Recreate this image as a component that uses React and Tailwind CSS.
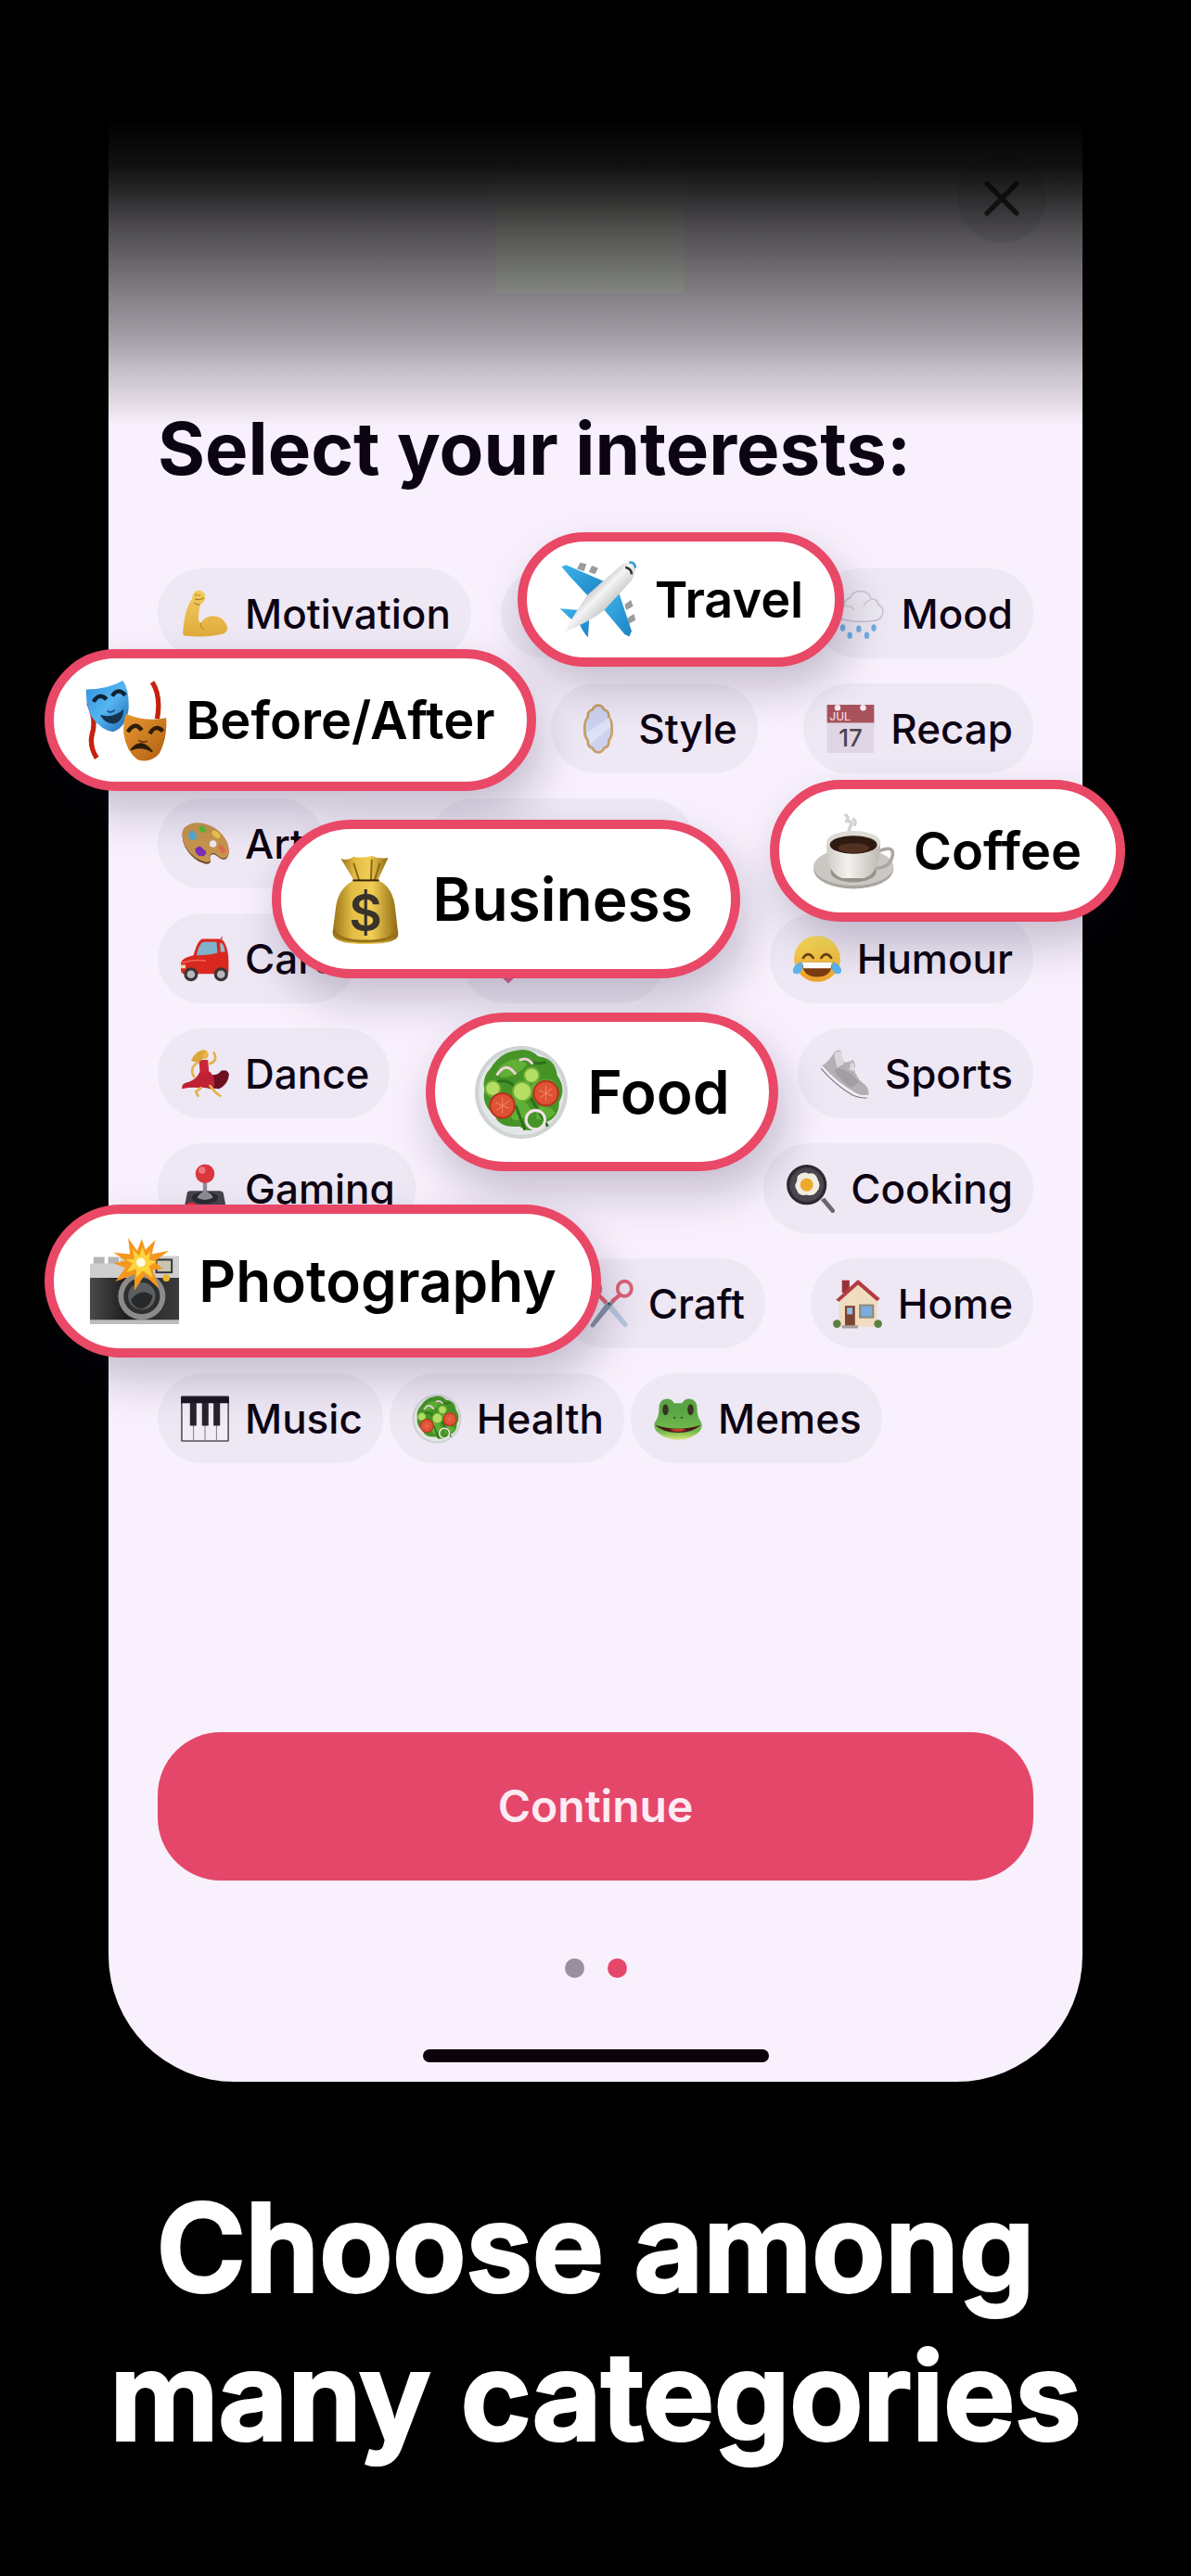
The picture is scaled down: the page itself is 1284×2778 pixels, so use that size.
import { useState } from "react";
import { X } from "lucide-react";

// Emoji style drawings, all on a 100 x 100 box
const icons = {
  arm: (
    <>
      <defs>
        <linearGradient id="arm" x1="0" y1="0" x2="0" y2="1">
          <stop offset="0" stopColor="#f3cd5e" />
          <stop offset="1" stopColor="#e0ab3c" />
        </linearGradient>
      </defs>
      <path d="M24 20 Q26 4 36 3 Q49 4 50 14 Q51 26 40 32 Q37 46 37 60 Q38 67 42 68 Q50 54 66 54 Q86 54 94 74 Q97 86 86 90 Q56 98 12 94 Q5 94 6 86 Q8 50 20 26 Z" fill="url(#arm)" />
      <path d="M30 14 l5 -4 M37 14 l4 -2 M30 20 Q38 24 48 18 M28 28 Q34 32 40 32" stroke="#a87820" strokeWidth="2" fill="none" />
      <path d="M42 68 Q40 77 48 82" stroke="#bd8a2b" strokeWidth="2" fill="none" />
    </>
  ),
  plane: (
    <>
      <defs>
        <linearGradient id="body" x1="0" y1="0" x2="1" y2="1">
          <stop offset="0.25" stopColor="#8d8d8d" />
          <stop offset="0.48" stopColor="#f5f5f5" />
          <stop offset="0.8" stopColor="#9a9a9a" />
        </linearGradient>
        <linearGradient id="wing" x1="0" y1="0" x2="1" y2="1">
          <stop offset="0" stopColor="#3cb4ea" />
          <stop offset="1" stopColor="#1d83c4" />
        </linearGradient>
      </defs>
      <g fill="#9b9b9b">
        <path d="M24 10 l4 -8 l8 2 l-3 9 z M39 14 l4 -8 l8 3 l-4 8 z M85 56 l8 -6 l3 8 l-9 5 z M89 73 l8 -5 l2 8 l-9 5 z" />
      </g>
      <path d="M4 7 L10 5 L58 26 L38 45 L14 19 Z" fill="url(#wing)" />
      <path d="M58 62 L78 42 L94 90 L91 97 L85 94 Z" fill="url(#wing)" />
      <path d="M2 61 L26 63 L34 68 L24 80 Q12 72 2 61 Z M25 76 L40 68 L38 98 Q30 90 25 76 Z" fill="url(#wing)" />
      <path d="M80 6 Q91 -1 98 3 Q101 10 94 25 L58 64 Q40 78 8 91 Q20 68 38 43 Z" fill="url(#body)" />
      <path d="M86 8 Q94 10 94 17" stroke="#333" strokeWidth="3" fill="none" />
      <path d="M91 2 Q98 1 99 9" stroke="#2f97d8" strokeWidth="3" fill="none" />
    </>
  ),
  masks: (
    <>
      <defs>
        <linearGradient id="blueMask" x1="0" y1="0" x2="1" y2="1">
          <stop offset="0" stopColor="#2d8fdb" />
          <stop offset="0.5" stopColor="#55b5f2" />
          <stop offset="1" stopColor="#1b66ae" />
        </linearGradient>
        <linearGradient id="goldMask" x1="0" y1="0" x2="1" y2="1">
          <stop offset="0" stopColor="#e99a32" />
          <stop offset="1" stopColor="#b05e12" />
        </linearGradient>
      </defs>
      <path d="M4 28 Q14 50 8 68 Q5 82 14 96" stroke="#c5220f" strokeWidth="6" fill="none" />
      <path d="M82 3 Q93 20 88 48" stroke="#c5220f" strokeWidth="6" fill="none" />
      <path d="M1 12 Q26 12 46 1 Q54 12 53 36 Q50 58 34 64 Q20 62 8 46 Q0 30 1 12 Z" fill="url(#blueMask)" />
      <path d="M10 27 Q17 15 26 24 M33 20 Q40 9 49 19" stroke="#123" strokeWidth="5" fill="none" />
      <path d="M18 43 Q34 48 47 36 Q46 52 34 54 Q24 54 18 43 Z" fill="#14334f" />
      <path d="M27 38 q4 4 9 -1" stroke="#195486" strokeWidth="2" fill="none" />
      <path d="M50 42 Q75 52 99 47 Q101 70 91 90 Q80 103 64 98 Q50 88 47 66 Q46 52 50 42 Z" fill="url(#goldMask)" />
      <path d="M52 64 Q61 50 69 62 M79 66 Q86 54 95 63" stroke="#2d1c08" strokeWidth="5" fill="none" />
      <path d="M56 86 Q68 70 82 88 Q68 80 56 86 Z" fill="#2d1c08" stroke="#2d1c08" strokeWidth="2" />
      <path d="M65 74 q5 4 11 1" stroke="#6d3c0b" strokeWidth="2" fill="none" />
    </>
  ),
  rain: (
    <>
      <path d="M18 62 Q2 58 5 44 Q8 34 18 34 Q16 22 28 18 Q36 2 54 5 Q68 8 70 20 Q84 20 85 32 Q98 38 93 52 Q88 64 74 64 Q46 68 18 62 Z" fill="#eeeaf3" stroke="#c7c3d2" strokeWidth="3" />
      <path d="M20 36 Q32 32 36 42 M70 22 Q58 24 56 36" stroke="#d6d1df" strokeWidth="3" fill="none" />
      <g fill="#6fb0e2">
        <ellipse cx="14" cy="78" rx="5" ry="7" />
        <ellipse cx="46" cy="80" rx="5" ry="7" />
        <ellipse cx="76" cy="78" rx="5" ry="7" />
        <ellipse cx="28" cy="93" rx="5" ry="7" />
        <ellipse cx="62" cy="93" rx="5" ry="7" />
      </g>
    </>
  ),
  mirror: (
    <>
      <path d="M50 3 Q58 3 62 12 Q72 14 71 27 Q78 34 77 50 Q78 66 71 73 Q72 86 62 88 Q58 97 50 97 Q42 97 38 88 Q28 86 29 73 Q22 66 23 50 Q22 34 29 27 Q28 14 38 12 Q42 3 50 3 Z" fill="#cdd2f0" stroke="#c5a066" strokeWidth="5" />
      <path d="M27 58 L72 28 L75 46 L34 80 Z" fill="#dfe2f6" />
    </>
  ),
  calendar: (
    <>
      <path d="M3 38 H97 V98 H3 Z" fill="#dfd5e4" />
      <path d="M3 2 H97 V38 H3 Z" fill="#a7525d" />
      <circle cx="24" cy="8" r="6" fill="#f8eaf3" />
      <circle cx="75" cy="8" r="6" fill="#f8eaf3" />
      <text x="8" y="33" fontSize="22" fill="#f1dbe4">JUL</text>
      <text x="50" y="85" fontSize="48" textAnchor="middle" fill="#4a4450">17</text>
    </>
  ),
  palette: (
    <>
      <path d="M6 24 Q18 6 46 11 Q78 18 94 48 Q102 70 92 80 Q84 84 76 76 Q68 68 62 72 Q58 76 61 82 Q62 92 50 90 Q26 84 10 56 Q2 38 6 24 Z" fill="#6b431f" />
      <path d="M6 22 Q18 4 46 9 Q78 16 94 46 Q102 68 92 78 Q84 82 76 74 Q68 66 62 70 Q58 74 61 80 Q62 88 50 86 Q26 80 10 54 Q2 36 6 22 Z" fill="#c7944f" />
      <path d="M17 32 q6 -14 13 -4 q8 8 0 14 q-12 4 -13 -10 z" fill="#54a9cf" />
      <path d="M38 18 q8 -10 12 0 q7 8 -2 10 q-10 0 -10 -10 z" fill="#5cb83a" />
      <path d="M65 24 q10 -2 16 10 q-2 9 -12 2 q-8 -6 -4 -12 z" fill="#edc74c" />
      <path d="M78 52 q10 2 14 13 q-4 8 -10 0 q-8 -8 -4 -13 z" fill="#e06a4c" />
      <path d="M30 60 q10 -10 16 0 q12 6 2 14 q-16 4 -18 -14 z" fill="#7a2fb4" />
      <circle cx="66" cy="50" r="7" fill="#f0e8f4" />
    </>
  ),
  bag: (
    <>
      <defs>
        <linearGradient id="bag" x1="0" y1="0" x2="1" y2="0">
          <stop offset="0" stopColor="#9a7315" />
          <stop offset="0.3" stopColor="#e3bd45" />
          <stop offset="0.6" stopColor="#f0cd55" />
          <stop offset="1" stopColor="#8f6810" />
        </linearGradient>
      </defs>
      <path d="M24 5 Q31 8 38 3 Q49 5 58 2 Q67 6 76 4 L64 30 L39 30 Z" fill="url(#bag)" />
      <path d="M38 10 L44 29 M58 6 L57 29 M67 10 L61 29" stroke="#8c6816" strokeWidth="2" />
      <path d="M38 29 H65 Q82 36 84 62 L87 88 Q88 99 51 99 Q14 99 15 86 L18 62 Q20 38 38 29 Z" fill="url(#bag)" />
      <path d="M37 29 H66" stroke="#33240b" strokeWidth="2" />
      <path d="M16 84 Q21 96 51 96 Q81 96 86 84" stroke="#96701a" strokeWidth="3" fill="none" />
      <text x="51" y="85" fontSize="56" textAnchor="middle" fill="#39332c">$</text>
    </>
  ),
  coffee: (
    <>
      <defs>
        <linearGradient id="cup" x1="0" y1="0" x2="1" y2="0">
          <stop offset="0" stopColor="#cfccc6" />
          <stop offset="0.4" stopColor="#f4f2ee" />
          <stop offset="1" stopColor="#bdb9b2" />
        </linearGradient>
      </defs>
      <path d="M38 5 q6 2 3 8 q8 0 4 7 q-4 6 3 10 M48 10 q5 3 2 9" stroke="#d2d2d2" strokeWidth="4" fill="none" />
      <ellipse cx="49" cy="72" rx="49" ry="24" fill="#a9a6a0" />
      <ellipse cx="49" cy="69" rx="49" ry="23" fill="#cbc8c3" />
      <ellipse cx="49" cy="75" rx="28" ry="13" fill="#96928b" />
      <path d="M80 50 Q98 42 97 54 Q95 70 76 71" stroke="#aaa7a2" strokeWidth="4" fill="none" />
      <path d="M16 39 Q16 79 36 83 H62 Q82 77 82 39 Z" fill="url(#cup)" />
      <ellipse cx="49" cy="39" rx="33" ry="14" fill="#dedbd5" />
      <ellipse cx="49" cy="42" rx="29" ry="11" fill="#2f1a12" />
      <ellipse cx="49" cy="46" rx="19" ry="6" fill="#523022" />
    </>
  ),
  car: (
    <>
      <path d="M81 17 L84 6" stroke="#9a3030" strokeWidth="2" />
      <path d="M27 43 Q36 10 46 10 H76 Q87 10 90 20 Q97 34 97 56 V74 Q97 80 90 80 H8 Q1 80 2 70 V58 Q4 48 27 43 Z" fill="#d9281f" />
      <path d="M33 43 Q39 17 48 16 H73 L75 38 Q60 43 33 43 Z" fill="#7fb2cb" />
      <path d="M80 18 Q88 18 90 36 H81 Z" fill="#94bccd" />
      <path d="M4 58 Q30 50 52 54" stroke="#f26359" strokeWidth="3" fill="none" />
      <circle cx="22" cy="81" r="14" fill="#3a3537" />
      <circle cx="22" cy="81" r="8" fill="#b9b7ba" />
      <circle cx="82" cy="81" r="14" fill="#3a3537" />
      <circle cx="82" cy="81" r="8" fill="#b9b7ba" />
      <rect x="2" y="62" width="9" height="7" fill="#f3d6a5" />
    </>
  ),
  heart: <path d="M50 99 Q4 58 6 32 Q10 6 32 8 Q46 10 50 24 Q54 10 68 8 Q90 6 94 32 Q96 58 50 99 Z" fill="#d8608f" />,
  laugh: (
    <>
      <defs>
        <linearGradient id="face" x1="0" y1="0" x2="0" y2="1">
          <stop offset="0" stopColor="#fbe25a" />
          <stop offset="1" stopColor="#eda02b" />
        </linearGradient>
      </defs>
      <circle cx="50" cy="50" r="46" fill="url(#face)" />
      <path d="M22 48 Q32 34 42 48 M58 48 Q68 34 78 48" stroke="#6d4312" strokeWidth="5" fill="none" strokeLinecap="round" />
      <path d="M20 57 H80 Q80 86 50 86 Q20 86 20 57 Z" fill="#7c3c12" />
      <path d="M20 57 H80 L77 69 H23 Z" fill="#fff" />
      <path d="M18 56 Q26 74 12 80 Q0 82 2 70 Q6 60 18 56 Z M82 56 Q74 74 88 80 Q100 82 98 70 Q94 60 82 56 Z" fill="#5db4ee" />
    </>
  ),
  dancer: (
    <>
      <path d="M60 52 Q76 54 82 44 Q96 40 98 52 Q96 72 78 80 L50 78 Z" fill="#6d1020" />
      <path d="M40 46 L60 46 Q74 60 66 82 Q50 76 36 78 Q22 76 4 80 Q2 68 18 66 Q32 62 40 46 Z" fill="#bf2135" />
      <path d="M38 22 H56 L58 48 H40 Z" fill="#c9263a" />
      <path d="M36 28 Q18 36 28 56 M58 30 Q76 26 68 8 M42 78 L32 86 L36 94 M60 74 L72 88 L80 94" stroke="#e5b148" strokeWidth="5" fill="none" strokeLinecap="round" />
      <circle cx="48" cy="12" r="9" fill="#e9b64d" />
      <path d="M22 24 Q34 -2 54 4 Q44 10 44 22 Q36 30 22 24 Z" fill="#dba63a" />
    </>
  ),
  salad: (
    <>
      <circle cx="50" cy="50" r="49" fill="#cfd3d4" />
      <circle cx="50" cy="50" r="45" fill="#e2e6e6" />
      <path d="M18 24 Q28 8 44 6 Q58 2 68 12 Q86 14 88 32 Q98 46 90 60 Q90 78 74 82 Q62 96 48 86 Q26 88 22 74 Q8 64 11 48 Q8 34 18 24 Z" fill="#469427" />
      <path d="M26 24 Q44 8 56 20 Q46 34 28 34 Z M58 44 Q80 28 88 44 Q84 54 66 54 Z M36 60 Q50 50 60 68 Q50 84 40 78 Z M66 66 Q80 62 86 72 Q76 82 66 78 Z" fill="#5fb035" />
      <path d="M16 44 Q34 30 46 48 M52 14 Q66 22 76 18 M44 64 L54 90 M60 56 L78 86" stroke="#2d701b" strokeWidth="3" fill="none" />
      <g fill="#b4df62" stroke="#6eae38" strokeWidth="2">
        <circle cx="20" cy="46" r="8" />
        <circle cx="61" cy="32" r="8" />
        <circle cx="51" cy="49" r="10" />
      </g>
      <g fill="#df5233" stroke="#b4351f" strokeWidth="2">
        <circle cx="30" cy="64" r="13" />
        <circle cx="76" cy="51" r="13" />
      </g>
      <path d="M30 56 V72 M23 61 L37 67 M37 59 L24 69 M76 43 V59 M69 48 L83 54 M82 46 L70 56" stroke="#ee8467" strokeWidth="1" />
      <circle cx="65" cy="79" r="10" fill="none" stroke="#f0e3e6" strokeWidth="3" />
      <path d="M24 32 Q34 16 44 31 M48 16 Q56 12 62 20" stroke="#eed3da" strokeWidth="3" fill="none" />
    </>
  ),
  shoe: (
    <>
      <path d="M4 34 Q16 28 28 8 Q34 0 42 4 Q42 20 50 28 Q58 26 66 22 Q72 32 70 46 Q76 62 92 74 Q100 86 96 94 Q82 98 60 84 Q26 62 4 40 Z" fill="#b3afb4" />
      <path d="M28 10 Q36 2 42 6 L48 30 L34 38 Z M62 26 L68 30 L70 46 L58 42 Z" fill="#dad7db" />
      <path d="M34 38 Q60 44 78 66 L62 78 Q44 66 30 46 Z" fill="#a19da2" />
      <path d="M3 36 Q34 70 66 88 Q82 98 96 94" stroke="#f1eff3" strokeWidth="5" fill="none" />
      <path d="M2 39 Q32 74 66 93 Q80 99 94 98" stroke="#79757c" strokeWidth="2" fill="none" />
      <path d="M68 40 l8 -2 M70 48 l8 -2 M74 56 l8 -2 M78 62 l8 -1" stroke="#eee" strokeWidth="3" />
    </>
  ),
  joystick: (
    <>
      <path d="M14 60 Q14 54 22 54 H78 Q86 54 87 60 L93 92 Q93 98 86 98 H14 Q7 98 8 92 Z" fill="#46434c" />
      <ellipse cx="50" cy="68" rx="26" ry="12" fill="#2a2830" />
      <path d="M46 28 H54 V56 Q64 60 66 68 Q50 76 34 68 Q38 60 46 56 Z" fill="#8d8a95" />
      <circle cx="50" cy="20" r="19" fill="#d93640" />
      <circle cx="44" cy="13" r="7" fill="#f0767b" />
      <ellipse cx="23" cy="82" rx="9" ry="5" fill="#d92d38" />
    </>
  ),
  pan: (
    <>
      <path d="M70 72 L78 68 L98 92 Q99 99 92 98 Z" fill="#6a6670" />
      <circle cx="42" cy="42" r="40" fill="#2c2930" />
      <circle cx="42" cy="42" r="34" fill="#4b4750" />
      <path d="M24 24 Q36 14 46 20 Q60 16 64 32 Q72 44 62 56 Q54 66 42 62 Q26 66 22 52 Q16 44 22 36 Z" fill="#f3eee4" />
      <circle cx="42" cy="42" r="13" fill="#edaa2c" />
    </>
  ),
  camera: (
    <>
      <defs>
        <linearGradient id="leather" x1="0" y1="0" x2="1" y2="0">
          <stop offset="0" stopColor="#4a4a4a" />
          <stop offset="0.4" stopColor="#1f1f1f" />
          <stop offset="1" stopColor="#3b3b3b" />
        </linearGradient>
      </defs>
      <path d="M5 23 H17 V32 H5 Z M21 23 H33 V32 H21 Z" fill="#b5b5b5" />
      <path d="M1 32 Q1 30 4 30 H34 V22 H99 V46 H1 Z" fill="#cfcfcf" />
      <path d="M1 46 H99 V94 H1 Z" fill="url(#leather)" />
      <path d="M1 92 H99 V97 H1 Z" fill="#bdbdbd" />
      <rect x="74" y="26" width="17" height="14" fill="#c9c3b2" stroke="#333" strokeWidth="2" />
      <circle cx="85" cy="46" r="4" fill="#e9b52c" />
      <circle cx="58" cy="66" r="26" fill="#8b8b8b" />
      <circle cx="58" cy="66" r="20" fill="#2e2e2e" />
      <circle cx="58" cy="66" r="15" fill="#5b5e60" />
      <path d="M46 70 Q58 56 70 66 Q66 80 56 80 Q48 78 46 70 Z" fill="#26282a" />
      <path d="M43 2 L53 16 L58 3 L62 15 L73 4 L69 20 L88 16 L72 28 L81 36 L70 37 L77 58 L61 43 L50 60 L50 42 L29 50 L40 35 L27 30 L40 27 L27 18 L45 20 Z" fill="#f5961d" />
      <path d="M48 14 L55 22 L59 12 L62 22 L68 17 L66 26 L75 28 L66 33 L70 46 L59 38 L52 46 L52 36 L41 40 L48 30 L40 26 L50 25 Z" fill="#fcd53c" />
      <circle cx="57" cy="29" r="5" fill="#fffbe0" />
    </>
  ),
  scissors: (
    <>
      <path d="M30 38 L56 50 L88 90 Q88 98 82 97 L44 54 Z" fill="#bcc8de" />
      <path d="M70 38 L44 50 L14 92 Q14 98 20 97 L56 54 Z" fill="#8791a5" />
      <ellipse cx="82" cy="20" rx="14" ry="15" fill="none" stroke="#dd6176" strokeWidth="7" />
      <ellipse cx="20" cy="20" rx="14" ry="15" fill="none" stroke="#dd6176" strokeWidth="7" />
      <path d="M30 32 L46 48 M72 33 L56 46" stroke="#dd6176" strokeWidth="8" />
      <circle cx="51" cy="50" r="3" fill="#4b5362" />
    </>
  ),
  house: (
    <>
      <path d="M18 3 H33 V28 H18 Z" fill="#9c3038" />
      <path d="M12 42 L50 8 L88 42 V96 H12 Z" fill="#f0dcc0" />
      <path d="M6 42 L50 2 L94 40 L88 45 L50 12 L12 46 Z" fill="#b43c42" />
      <rect x="24" y="54" width="20" height="40" fill="#7c4330" />
      <rect x="28" y="58" width="11" height="13" fill="#8ebce6" />
      <rect x="54" y="53" width="26" height="24" fill="#7aade0" stroke="#8f8a80" strokeWidth="4" />
      <path d="M18 93 H50 V99 H18 Z" fill="#a59c9b" />
      <circle cx="8" cy="90" r="8" fill="#5c8042" />
      <circle cx="90" cy="90" r="8" fill="#5c8042" />
    </>
  ),
  piano: (
    <>
      <rect x="2" y="4" width="96" height="92" rx="3" fill="#575059" />
      <rect x="5" y="18" width="90" height="75" fill="#f2ecf5" />
      <path d="M2 6 H98 V19 H2 Z" fill="#1d1422" />
      <path d="M27 60 V94 M50 60 V94 M73 60 V94" stroke="#8b828e" strokeWidth="2" />
      <path d="M20 18 H33 V64 H20 Z M44 18 H57 V64 H44 Z M67 18 H80 V64 H67 Z" fill="#2a212f" />
    </>
  ),
  frog: (
    <>
      <defs>
        <linearGradient id="frog" x1="0" y1="0" x2="0" y2="1">
          <stop offset="0.3" stopColor="#59a444" />
          <stop offset="0.8" stopColor="#74bb4e" />
          <stop offset="1" stopColor="#dbe57a" />
        </linearGradient>
      </defs>
      <path d="M12 30 Q12 10 28 10 Q38 10 42 19 H58 Q62 10 72 10 Q88 10 88 30 Q88 42 92 50 Q102 62 94 74 Q78 92 50 92 Q22 92 6 74 Q-2 62 8 50 Q12 42 12 30 Z" fill="url(#frog)" />
      <ellipse cx="25" cy="32" rx="6" ry="11" fill="#3a3320" />
      <ellipse cx="75" cy="32" rx="6" ry="11" fill="#3a3320" />
      <path d="M4 62 Q28 70 50 70 Q72 70 96 62 Q80 78 50 78 Q20 78 4 62 Z" fill="#4c1a16" />
      <path d="M34 72 Q50 68 66 72 Q50 80 34 72 Z" fill="#c23a2e" />
      <circle cx="43" cy="48" r="2" fill="#2a5522" />
      <circle cx="57" cy="48" r="2" fill="#2a5522" />
    </>
  ),
};

function Icon({ name, className }) {
  return (
    <svg viewBox="0 0 100 100" className={`shrink-0 ${className}`} aria-hidden="true">
      {icons[name]}
    </svg>
  );
}

// Entries without a label are the ones lying under a highlighted category
const rows = [
  [
    { label: "Motivation", icon: "arm" },
    { width: "w-[306px]" },
    { label: "Mood", icon: "rain" },
  ],
  [
    { width: "w-[375px]" },
    { label: "Style", icon: "mirror" },
    { label: "Recap", icon: "calendar" },
  ],
  [
    { label: "Art", icon: "palette" },
    { width: "w-[286px]" },
    { width: "w-[254px]" },
  ],
  [
    { label: "Cars", icon: "car" },
    { icon: "heart", width: "w-[220px]" },
    { label: "Humour", icon: "laugh" },
  ],
  [
    { label: "Dance", icon: "dancer" },
    { label: "Sports", icon: "shoe" },
  ],
  [
    { label: "Gaming", icon: "joystick" },
    { label: "Cooking", icon: "pan" },
  ],
  [
    { width: "w-[386px]" },
    { label: "Craft", icon: "scissors" },
    { label: "Home", icon: "house" },
  ],
];

const lastRow = [
  { label: "Music", icon: "piano" },
  { label: "Health", icon: "salad" },
  { label: "Memes", icon: "frog" },
];

const highlights = [
  {
    label: "Travel",
    icon: "plane",
    box: "left-[441px] top-[444px] h-[145px] w-[352px] text-[54px] gap-5",
    size: "size-[84px]",
  },
  {
    label: "Before/After",
    icon: "masks",
    box: "left-[-69px] top-[570px] h-[153px] w-[530px] text-[56px] gap-5",
    size: "size-[88px]",
  },
  {
    label: "Business",
    icon: "bag",
    box: "left-[176px] top-[754px] h-[171px] w-[505px] text-[64px] gap-6",
    size: "size-[98px]",
  },
  {
    label: "Coffee",
    icon: "coffee",
    box: "right-[-46px] top-[711px] h-[153px] w-[383px] text-[56px] gap-5",
    size: "size-[88px]",
  },
  {
    label: "Food",
    icon: "salad",
    box: "left-[342px] top-[962px] h-[171px] w-[380px] text-[64px] gap-5",
    size: "size-[102px]",
  },
  {
    label: "Photography",
    icon: "camera",
    box: "left-[-69px] top-[1169px] h-[165px] w-[600px] text-[62px] gap-5",
    size: "size-[98px]",
  },
];

function Chip({ item, selected, onClick }) {
  if (!item.label) {
    return (
      <div className={`flex h-[97px] items-center rounded-full bg-[#eee7f4] pl-6 ${item.width}`}>
        {item.icon && <Icon name={item.icon} className="size-[54px]" />}
      </div>
    );
  }

  return (
    <button
      type="button"
      aria-pressed={selected}
      onClick={onClick}
      className="flex h-[97px] items-center gap-4 rounded-full bg-[#eee7f4] pl-6 pr-[22px] text-[44px] font-medium text-[#0d0413]"
    >
      <Icon name={item.icon} className="size-[54px]" />
      {item.label}
    </button>
  );
}

export default function App() {
  const [selected, setSelected] = useState(highlights.map((h) => h.label));

  const toggle = (label) => {
    setSelected((prev) =>
      prev.includes(label) ? prev.filter((l) => l !== label) : [...prev, label]
    );
  };

  return (
    <div className="min-h-screen overflow-hidden bg-black font-['Inter',sans-serif]">
      {/* Phone screen */}
      <main className="relative mx-[117px] mt-[130px] rounded-b-[136px] bg-[#f8f0fc] px-[53px] pb-[21px]">
        <div className="flex h-[306px] items-start justify-end pt-[36px]">
          <div className="mr-[294px] mt-[14px] h-[137px] w-[204px] bg-[#fafff6]" />
          <button
            type="button"
            aria-label="Close"
            className="-mr-[14px] flex size-[96px] items-center justify-center rounded-full bg-[#e6dfea] text-[#4b464e]"
          >
            <X size={64} strokeWidth={2} />
          </button>
        </div>

        <h1 className="text-[78px] font-bold leading-[96px] text-[#0d0413]">
          Select your interests:
        </h1>

        {/* Interests */}
        <div className="mt-[81px] flex flex-col gap-[27px]">
          {rows.map((row, i) => (
            <div key={i} className="flex justify-between">
              {row.map((item, j) => (
                <Chip
                  key={j}
                  item={item}
                  selected={selected.includes(item.label)}
                  onClick={() => toggle(item.label)}
                />
              ))}
            </div>
          ))}
          <div className="flex gap-[7px]">
            {lastRow.map((item) => (
              <Chip
                key={item.label}
                item={item}
                selected={selected.includes(item.label)}
                onClick={() => toggle(item.label)}
              />
            ))}
          </div>
        </div>

        <button
          type="button"
          className="mt-[290px] h-[160px] w-full rounded-[68px] bg-[#e5476a] text-[48px] font-semibold text-[#fdebf4]"
        >
          Continue
        </button>

        <div className="mt-[84px] flex justify-center gap-[25px]">
          <span className="size-[21px] rounded-full bg-[#998f9e]" />
          <span className="size-[21px] rounded-full bg-[#e5476a]" />
        </div>
        <div className="mx-auto mt-[77px] h-[14px] w-[373px] rounded-full bg-[#0c020c]" />

        {/* Fade over the status bar */}
        <div className="pointer-events-none absolute inset-x-0 top-0 h-[330px] bg-[linear-gradient(to_bottom,#000_0%,rgba(0,0,0,0.93)_15%,rgba(0,0,0,0.84)_23%,rgba(0,0,0,0.68)_36%,rgba(0,0,0,0.47)_57%,rgba(0,0,0,0.33)_72%,rgba(0,0,0,0.2)_82%,rgba(0,0,0,0.06)_95%,transparent_100%)]" />

        {/* Highlighted categories */}
        {highlights.map((h) => (
          <button
            key={h.label}
            type="button"
            aria-pressed={selected.includes(h.label)}
            onClick={() => toggle(h.label)}
            className={`absolute flex items-center justify-center rounded-full border-[10px] border-[#e94866] bg-white font-semibold text-black shadow-[8px_24px_48px_rgba(20,15,50,0.22)] ${h.box}`}
          >
            <Icon name={h.icon} className={h.size} />
            {h.label}
          </button>
        ))}
      </main>

      <h2 className="mt-[99px] text-center text-[130px] font-semibold leading-[160px] text-white [-webkit-text-stroke:4px_white] [stroke-linejoin:round]">
        Choose among
        <br />
        many categories
      </h2>
    </div>
  );
}
